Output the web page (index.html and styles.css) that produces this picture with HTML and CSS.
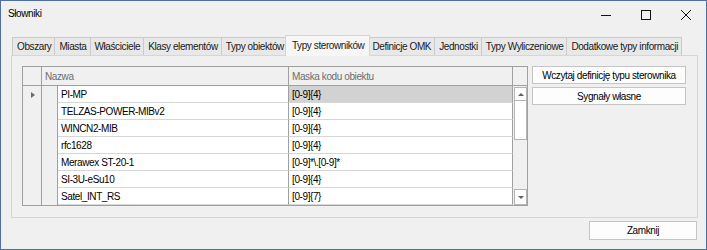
FILE: index.html
```html
<!DOCTYPE html>
<html lang="pl">
<head>
    <meta charset="UTF-8">
    <title>Słowniki</title>
    <link rel="stylesheet" href="styles.css">
</head>
<body>
<div class="window">
    <div class="titlebar">
        <span class="title">Słowniki</span>
        <div class="caption">
            <span class="cap-btn">
                <svg width="10" height="10" viewBox="0 0 10 10"><path d="M0 5.5H10" stroke="#111" stroke-width="1"/></svg>
            </span>
            <span class="cap-btn">
                <svg width="10" height="10" viewBox="0 0 10 10"><rect x="0.5" y="0.5" width="9" height="9" fill="none" stroke="#111" stroke-width="1"/></svg>
            </span>
            <span class="cap-btn">
                <svg width="10" height="10" viewBox="0 0 10 10"><path d="M0 0L10 10M10 0L0 10" stroke="#111" stroke-width="1"/></svg>
            </span>
        </div>
    </div>

    <div class="content">
        <div class="tabs">
            <span class="tab first">Obszary</span>
            <span class="tab">Miasta</span>
            <span class="tab">Właściciele</span>
            <span class="tab">Klasy elementów</span>
            <span class="tab">Typy obiektów</span>
            <span class="tab active">Typy sterowników</span>
            <span class="tab">Definicje OMK</span>
            <span class="tab">Jednostki</span>
            <span class="tab">Typy Wyliczeniowe</span>
            <span class="tab">Dodatkowe typy informacji</span>
        </div>

        <div class="tab-page">
            <div class="grid">
                <!-- header -->
                <div class="hcell"></div>
                <div class="hcell name-head">Nazwa</div>
                <div class="hcell">Maska kodu obiektu</div>
                <div class="hcell corner"></div>

                <!-- vertical scrollbar -->
                <div class="vscroll">
                    <span class="sb-btn"><i class="arrow-up"></i></span>
                    <span class="sb-thumb"></span>
                    <span class="sb-track"></span>
                    <span class="sb-btn down"><i class="arrow-down"></i></span>
                </div>

                <!-- rows -->
                <div class="rh"><i class="marker"></i></div><div class="indent"></div>
                <div class="cell">PI-MP</div><div class="cell selected">[0-9]{4}</div>

                <div class="rh"></div><div class="indent"></div>
                <div class="cell">TELZAS-POWER-MIBv2</div><div class="cell">[0-9]{4}</div>

                <div class="rh"></div><div class="indent"></div>
                <div class="cell">WINCN2-MIB</div><div class="cell">[0-9]{4}</div>

                <div class="rh"></div><div class="indent"></div>
                <div class="cell">rfc1628</div><div class="cell">[0-9]{4}</div>

                <div class="rh"></div><div class="indent"></div>
                <div class="cell">Merawex ST-20-1</div><div class="cell">[0-9]*\.[0-9]*</div>

                <div class="rh"></div><div class="indent"></div>
                <div class="cell">SI-3U-eSu10</div><div class="cell">[0-9]{4}</div>

                <div class="rh"></div><div class="indent"></div>
                <div class="cell">Satel_INT_RS</div><div class="cell">[0-9]{7}</div>
            </div>

            <div class="side-buttons">
                <button class="btn">Wczytaj definicję typu sterownika</button>
                <button class="btn">Sygnały własne</button>
            </div>
        </div>

        <div class="footer">
            <button class="btn close-btn">Zamknij</button>
        </div>
    </div>
</div>
</body>
</html>
```

FILE: styles.css
```css
body {
    margin: 0;
    font-family: "Liberation Sans", Arial, sans-serif;
    font-size: 10px;
    letter-spacing: -0.4px;
    color: #000;
    background: #f0f0f0;
}

.window {
    width: 707px;
    height: 250px;
    box-sizing: border-box;
    border: 1px solid #4f6fa2;
    background: #f0f0f0;
    display: flex;
    flex-direction: column;
}

/* Title bar */
.titlebar {
    height: 29px;
    display: flex;
    align-items: center;
    flex-shrink: 0;
}

.title {
    padding-left: 7px;
    padding-bottom: 4px;
    flex: 1;
}

.caption {
    display: flex;
    height: 100%;
}

.cap-btn {
    width: 40px;
    display: flex;
    align-items: center;
    justify-content: center;
    padding-bottom: 2px;
}

/* Tabs */
.content {
    padding: 5px 8px 0 10px;
    display: flex;
    flex-direction: column;
}

.tabs {
    display: flex;
    align-items: flex-end;
    height: 20px;
    padding-left: 1px;
}

.tab {
    height: 18px;
    box-sizing: border-box;
    padding: 3px 3px 0 4px;
    border: 1px solid #cacaca;
    border-bottom: none;
    background: #e8e8e8;
    color: #1a1a1a;
    white-space: nowrap;
    margin-left: -1px;
}

.tab.first {
    margin-left: 0;
}

.tab.active {
    position: relative;
    z-index: 1;
    height: 21px;
    margin: 0 -2px -1px -3px;
    padding: 4px 5px 0 6px;
    background: #f6f6f6;
    border-color: #d4d4d4;
}

.tab-page {
    border: 1px solid #d6d6d6;
    background: #f0f0f0;
    padding: 10px 12px 11px 10px;
    display: flex;
    gap: 4px;
    align-items: flex-start;
}

/* Data grid */
.grid {
    display: grid;
    grid-template-columns: 19px 16px 231px 224px 14px;
    grid-template-rows: 19px repeat(7, 17px);
    border: 1px solid #a0a0a0;
    background: #fff;
}

.hcell {
    background: #f0f0f0;
    color: #6d6d6d;
    border-right: 1px solid #a0a0a0;
    border-bottom: 1px solid #a0a0a0;
    padding: 4px 0 0 3px;
    box-sizing: border-box;
    white-space: nowrap;
}

.name-head {
    grid-column: span 2;
}

.hcell.corner {
    border-right: none;
    padding: 0;
}

.rh {
    background: #f0f0f0;
    border-right: 1px solid #a0a0a0;
    display: flex;
    align-items: center;
    padding-left: 8px;
}

.marker {
    width: 0;
    height: 0;
    border-style: solid;
    border-width: 3.5px 0 3.5px 4px;
    border-color: transparent transparent transparent #6a6a6a;
}

.indent {
    background: #f0f0f0;
    border-right: 1px solid #a0a0a0;
}

.cell {
    border-right: 1px solid #a0a0a0;
    border-bottom: 1px solid #d6d6d6;
    padding: 3px 0 0 3px;
    box-sizing: border-box;
    white-space: nowrap;
}

.cell.selected {
    background: #d2d2d2;
}

/* Scrollbar */
.vscroll {
    grid-column: 5;
    grid-row: 2 / 9;
    background: #f0f0f0;
    display: flex;
    flex-direction: column;
    padding: 1px 0 0 1px;
    box-sizing: border-box;
}

.sb-btn {
    height: 12px;
    border: 1px solid #b4b4b4;
    background: #fcfcfc;
    display: flex;
    align-items: center;
    justify-content: center;
}

.sb-btn.down {
    height: 14px;
}

.sb-thumb {
    height: 38px;
    border: 1px solid #b4b4b4;
    border-top: none;
    background: #fff;
}

.sb-track {
    flex: 1;
}

.arrow-up,
.arrow-down {
    width: 0;
    height: 0;
    border-style: solid;
}

.arrow-up {
    border-width: 0 3px 3px 3px;
    border-color: transparent transparent #606060 transparent;
}

.arrow-down {
    border-width: 3px 3px 0 3px;
    border-color: #606060 transparent transparent transparent;
}

/* Buttons */
.side-buttons {
    display: flex;
    flex-direction: column;
    gap: 3px;
}

.btn {
    font-family: inherit;
    font-size: 10px;
    letter-spacing: -0.4px;
    color: #000;
    background: #fdfdfd;
    border: 1px solid #c4c4c4;
    border-radius: 0;
    height: 18px;
    padding: 0;
    margin: 0;
    white-space: nowrap;
}

.side-buttons .btn {
    width: 154px;
}

.footer {
    display: flex;
    justify-content: flex-end;
    padding: 3px 1px 0 0;
}

.close-btn {
    width: 108px;
    height: 19px;
}
```
